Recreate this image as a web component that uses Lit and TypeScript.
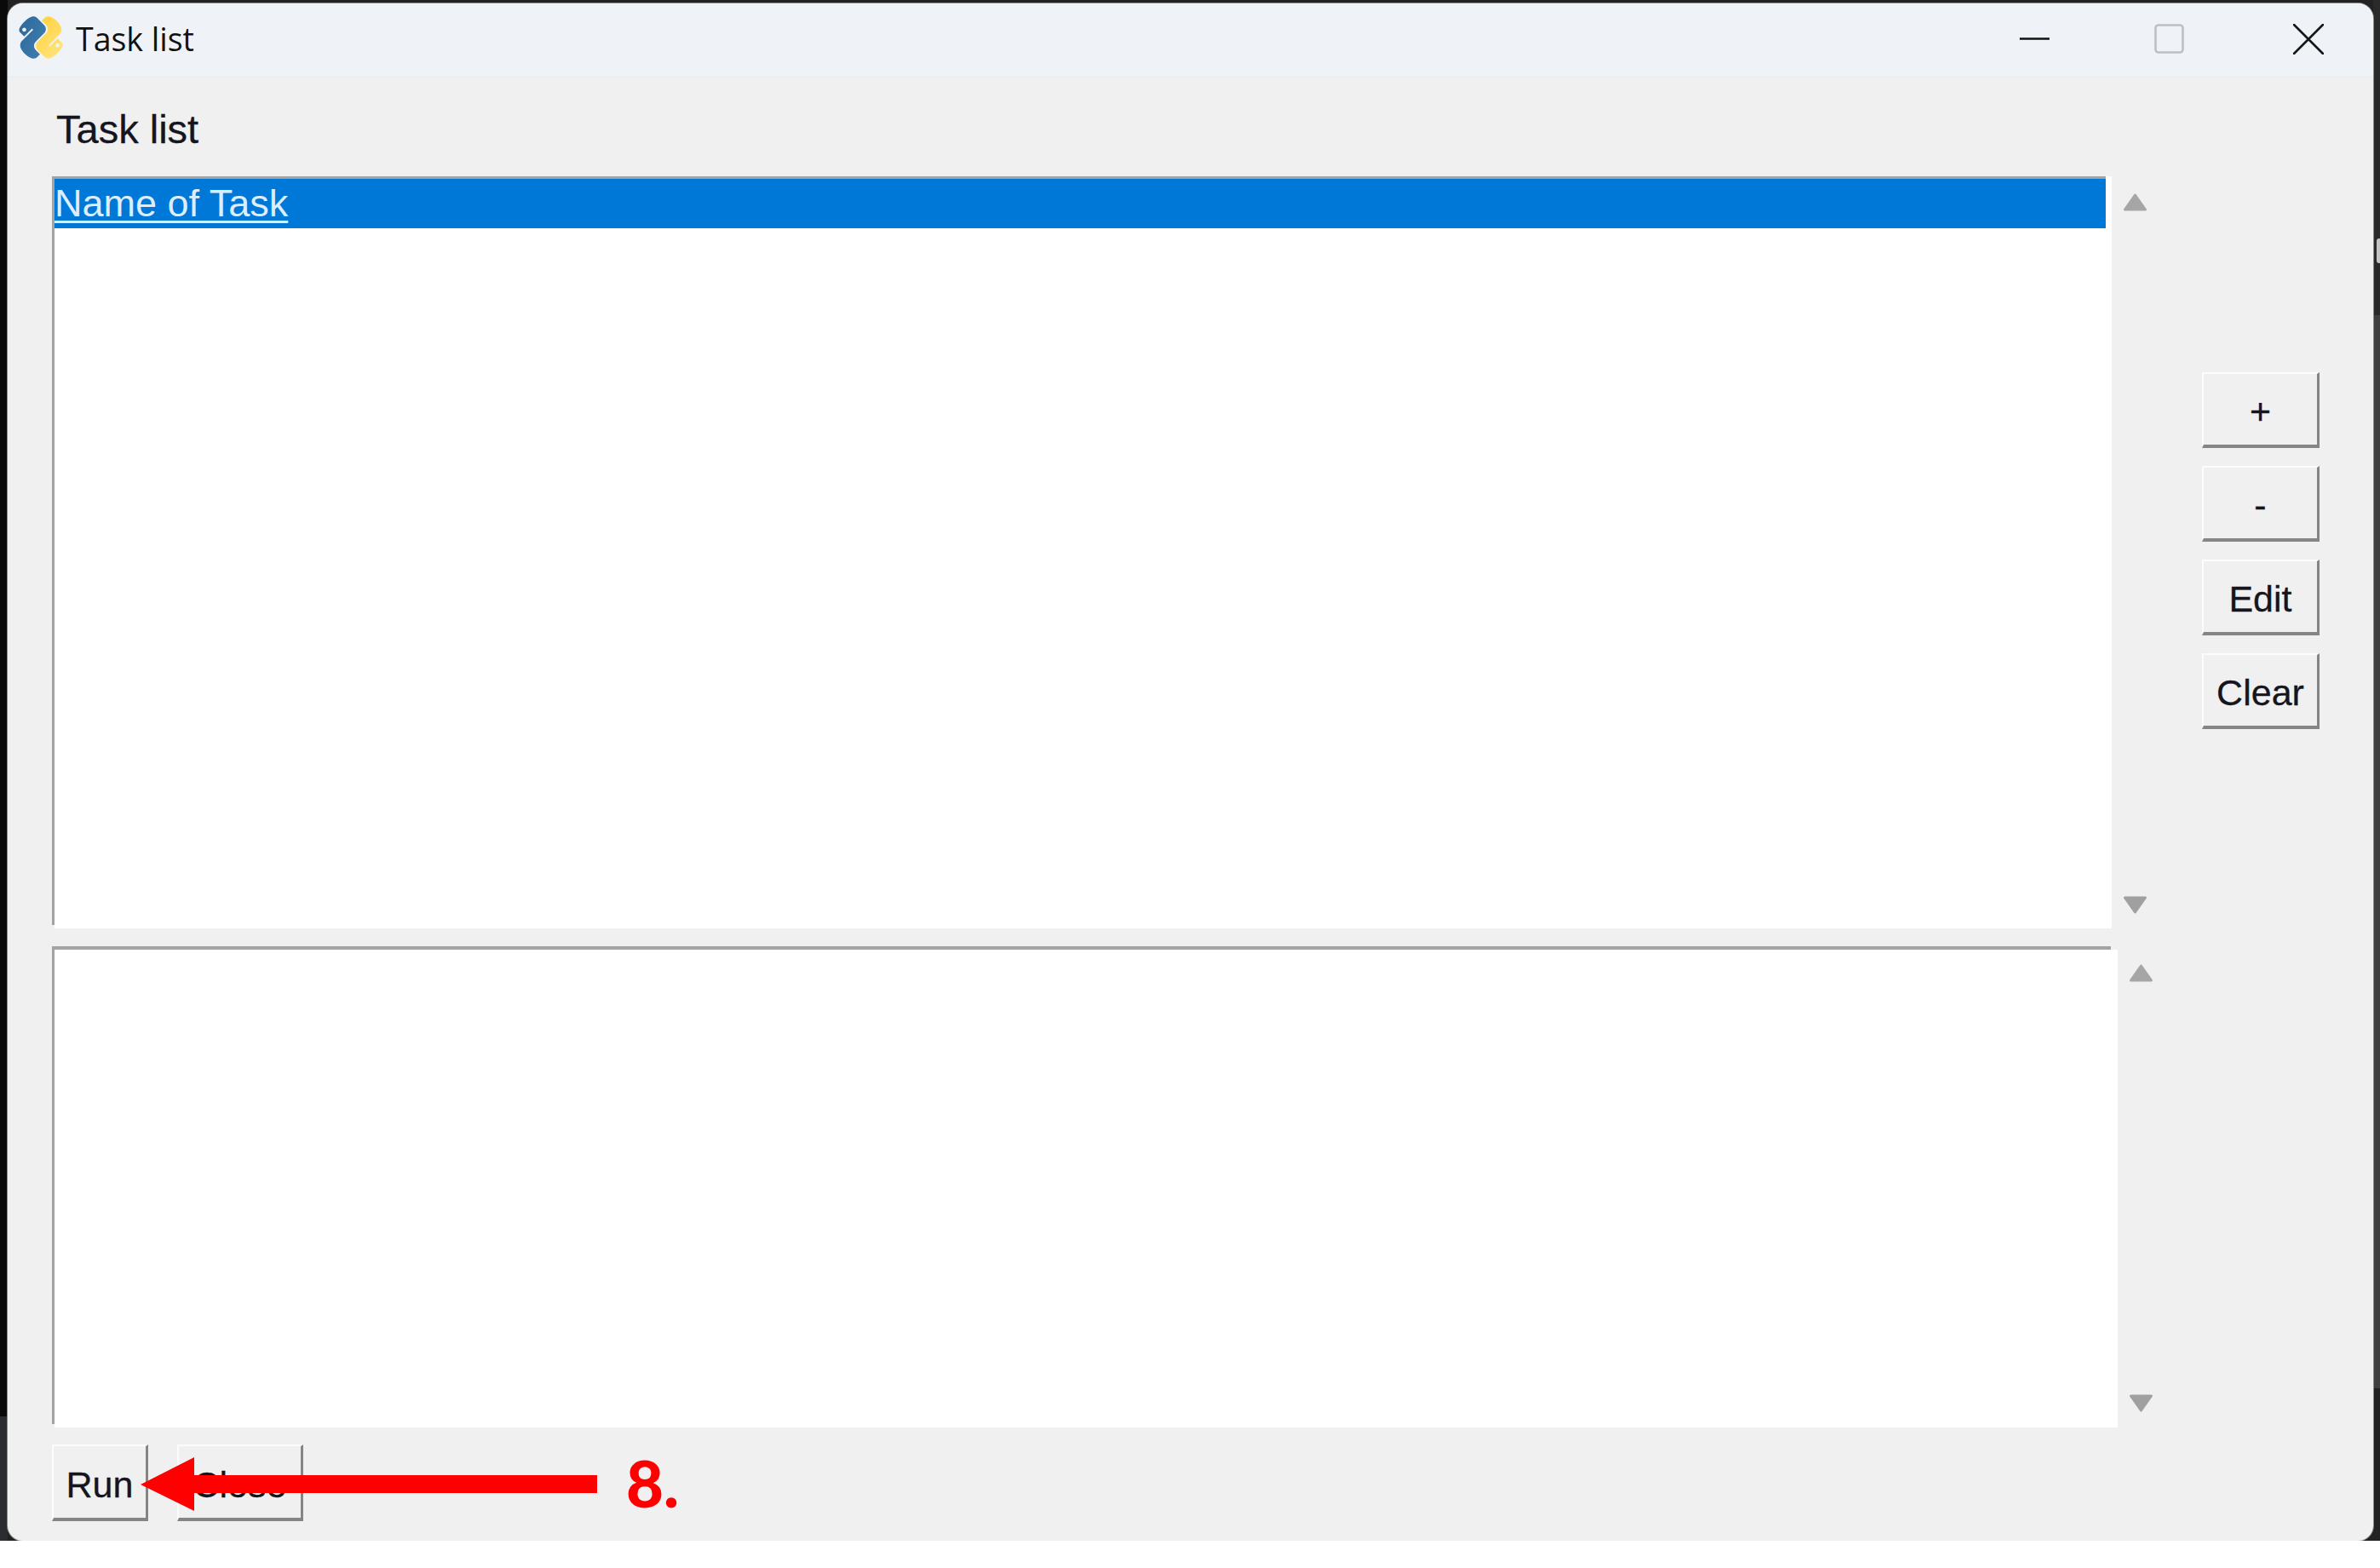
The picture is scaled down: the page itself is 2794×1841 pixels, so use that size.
import { LitElement, html, css, svg } from "lit";
import { customElement } from "lit/decorators.js";

const blue = "M14.25.18l.9.2.73.26.59.3.45.32.34.34.25.34.16.33.1.3.04.26.02.2-.01.13V8.5l-.05.63-.13.55-.21.46-.26.38-.3.31-.33.25-.35.19-.35.14-.33.1-.3.07-.26.04-.21.02H8.77l-.69.05-.59.14-.5.22-.41.27-.33.32-.27.35-.2.36-.15.37-.1.35-.07.32-.04.27-.02.21v3.06H3.17l-.21-.03-.28-.07-.32-.12-.35-.18-.36-.26-.36-.36-.35-.46-.32-.59-.28-.73-.21-.88-.14-1.05-.05-1.23.06-1.22.16-1.04.24-.87.32-.71.36-.57.4-.44.42-.33.42-.24.4-.16.36-.1.32-.05.24-.01h.16l.06.01h8.16v-.83H6.18l-.01-2.75-.02-.37.05-.34.11-.31.17-.28.25-.26.31-.23.38-.2.44-.18.51-.15.58-.12.64-.1.71-.06.77-.04.84-.02 1.27.05zm-6.3 1.98l-.23.33-.08.41.08.41.23.34.33.22.41.09.41-.09.33-.22.23-.34.08-.41-.08-.41-.23-.33-.33-.22-.41-.09-.41.09z";
const yellow = "M21.04 6.11l.28.06.32.12.35.18.36.27.36.35.35.47.32.59.28.73.21.88.14 1.04.05 1.23-.06 1.23-.16 1.04-.24.86-.32.71-.36.57-.4.45-.42.33-.42.24-.4.16-.36.09-.32.05-.24.02-.16-.01h-8.22v.82h5.84l.01 2.76.02.36-.05.34-.11.31-.17.29-.25.25-.31.24-.38.2-.44.17-.51.15-.58.13-.64.09-.71.07-.77.04-.84.01-1.27-.04-1.07-.14-.9-.2-.73-.25-.59-.3-.45-.33-.34-.34-.25-.34-.16-.33-.1-.3-.04-.25-.02-.2.01-.13v-5.34l.05-.64.13-.54.21-.46.26-.38.3-.32.33-.24.35-.2.35-.14.33-.1.3-.06.26-.04.21-.02.13-.01h5.84l.69-.05.59-.14.5-.21.41-.28.33-.32.27-.35.2-.36.15-.36.1-.35.07-.32.04-.28.02-.21V6.07h2.09l.14.01zm-6.47 14.25l-.23.33-.08.41.08.41.23.33.33.23.41.08.41-.08.33-.23.23-.33.08-.41-.08-.41-.23-.33-.33-.23-.41-.08-.41.08z";

const upArrow = svg`<path d="M14.5 3L26.5 20H2.5Z" fill="#a6a6a6" stroke="#a6a6a6" stroke-width="3" stroke-linejoin="round"/>`;
const downArrow = svg`<path d="M14.5 19L26.5 2H2.5Z" fill="#a0a0a0" stroke="#a0a0a0" stroke-width="3" stroke-linejoin="round"/>`;

@customElement("app-root")
export class AppRoot extends LitElement {
  static styles = css`
    :host {
      display: block;
      position: relative;
      width: 2794px;
      height: 1841px;
      background: #fff;
      overflow: hidden;
      font-family: "Liberation Sans", Arial, sans-serif;
      color: #15151f;
    }
    .frame {
      height: 1809px;
      box-sizing: border-box;
      padding: 4px 8px 0 9px;
      overflow: hidden;
      background:
        linear-gradient(#0a0a0a, #0a0a0a) 0 0 / 9px 1663px no-repeat,
        linear-gradient(#2a2c2f, #2a2c2f) 0 1663px / 9px 146px no-repeat,
        linear-gradient(#2a2a2a, #2a2a2a) 100% 0 / 8px 370px no-repeat,
        linear-gradient(#3f3f3f, #3f3f3f) 100% 370px / 8px 1260px no-repeat,
        #222;
    }
    .window {
      height: 100%;
      display: flex;
      flex-direction: column;
      background: #f0f0f0;
      border-radius: 18px;
      box-shadow: 0 0 0 1px #8a8a8a;
      overflow: hidden;
    }
    .pill {
      position: absolute;
      left: 2790px;
      top: 280px;
      width: 6px;
      height: 29px;
      border-radius: 3px;
      background: #c4c4c4;
    }
    .titlebar {
      flex: none;
      height: 87px;
      box-sizing: border-box;
      display: flex;
      align-items: center;
      background: #eff3f8;
      border-bottom: 1px solid #e7eaee;
      padding: 0 58px 3px 13px;
    }
    .logo { width: 52px; height: 52px; flex: none; margin-top: -3px; overflow: visible; }
    .title {
      margin-left: 15px;
      font-family: "Open Sans", sans-serif;
      font-size: 37.5px;
      line-height: 50px;
      color: #111;
      flex: 1;
    }
    .ctl { flex: none; display: block; }
    .ctl.max { margin-left: 123px; }
    .ctl.close { margin-left: 128px; }
    .body {
      flex: 1;
      min-height: 0;
      display: flex;
      flex-direction: column;
      padding: 36px 0 23px 52px;
    }
    .label {
      font-size: 47px;
      line-height: 50px;
      margin: 0 0 30px 5px;
      -webkit-text-stroke: 0.3px currentColor;
    }
    .row { display: flex; flex: none; }
    .row.one { height: 883px; }
    .row.two { height: 565px; margin-top: 21px; }
    .box {
      box-sizing: border-box;
      flex: none;
      padding-left: 3px;
      background:
        linear-gradient(#a3a3a3, #a3a3a3) 0 0 / 3px calc(100% - 4px) no-repeat,
        linear-gradient(#fff, #fff) 3px 0 / 100% 100% no-repeat;
    }
    .row.one .box { width: 2418px; padding-right: 7px; }
    .row.two .box {
      width: 2425px;
      background:
        linear-gradient(#a3a3a3, #a3a3a3) 0 0 / 3px calc(100% - 4px) no-repeat,
        linear-gradient(#a3a3a3, #a3a3a3) 0 0 / calc(100% - 8px) 4px no-repeat,
        linear-gradient(#fff, #fff) 3px 4px / 100% 100% no-repeat;
    }
    .item {
      box-sizing: border-box;
      height: 61px;
      line-height: 58px;
      border-top: 3px solid #a3a3a3;
      background: #0078d7;
      background-clip: padding-box;
      color: #dcedfd;
      font-size: 45px;
      text-decoration: underline;
      text-decoration-thickness: 3px;
      text-underline-offset: 5px;
    }
    .scroll {
      flex: none;
      width: 29px;
      margin-left: 13px;
      display: flex;
      flex-direction: column;
      justify-content: space-between;
      padding: 19px 0 16px;
    }
    .row.two .scroll { padding: 20px 0 17px; }
    .scroll svg { display: block; width: 29px; height: 22px; }
    .side {
      margin: 230px 0 0 64px;
      display: flex;
      flex-direction: column;
      gap: 21px;
    }
    .btn {
      box-sizing: border-box;
      display: flex;
      align-items: center;
      justify-content: center;
      width: 138px;
      height: 89px;
      padding-top: 6px;
      background: #f0f0f0;
      border-style: solid;
      border-width: 2px 3px 4px 2px;
      border-color: #fcfcfc #858585 #858585 #fcfcfc;
      font-size: 43px;
      line-height: 1;
      color: #15151f;
      -webkit-text-stroke: 0.3px currentColor;
    }
    .footer { display: flex; gap: 34px; margin-top: 20px; flex: none; }
    .footer .btn { height: 90px; width: 113px; }
    .footer .btn.wide { width: 148px; }
    .annot { position: absolute; left: 165px; top: 1711px; display: block; }
    .eight {
      position: absolute;
      left: 735px;
      top: 1696px;
      font-family: "Lato", sans-serif;
      font-weight: 900;
      font-size: 76px;
      line-height: 90px;
      color: #ff0000;
    }
  `;

  render() {
    return html`
      <div class="frame">
        <div class="window">
          <div class="titlebar">
            <svg class="logo" viewBox="0 0 24 24">
              <defs>
                <linearGradient id="b" gradientUnits="userSpaceOnUse" x1="4" y1="2" x2="12" y2="23">
                  <stop offset="0" stop-color="#2f6a9b" />
                  <stop offset="1" stop-color="#4484b8" />
                </linearGradient>
                <linearGradient id="y" gradientUnits="userSpaceOnUse" x1="16" y1="2" x2="18" y2="23">
                  <stop offset="0" stop-color="#ffcf35" />
                  <stop offset="1" stop-color="#ffe278" />
                </linearGradient>
              </defs>
              <g transform="rotate(-45 12 12) translate(12 12) scale(1.03) translate(-12 -12)">
                <path fill="url(#b)" fill-rule="evenodd" d=${blue} />
                <path fill="url(#y)" fill-rule="evenodd" d=${yellow} />
              </g>
            </svg>
            <div class="title">Task list</div>
            <svg class="ctl min" width="35" height="35" viewBox="0 0 35 35">
              <path d="M0 17.5H35" stroke="#111" stroke-width="2.4" />
            </svg>
            <svg class="ctl max" width="35" height="35" viewBox="0 0 35 35">
              <rect x="1.5" y="1.5" width="32" height="32" rx="3.5" fill="none" stroke="#bcbfc3" stroke-width="2.6" />
            </svg>
            <svg class="ctl close" width="36" height="36" viewBox="0 0 36 36">
              <path d="M1 1L35 35M35 1L1 35" stroke="#161616" stroke-width="2.6" stroke-linecap="round" />
            </svg>
          </div>
          <div class="body">
            <div class="label">Task list</div>
            <div class="row one">
              <div class="box"><div class="item">Name of Task</div></div>
              <div class="scroll">
                <svg viewBox="0 0 29 22">${upArrow}</svg>
                <svg viewBox="0 0 29 22">${downArrow}</svg>
              </div>
              <div class="side">
                <div class="btn">+</div>
                <div class="btn">-</div>
                <div class="btn">Edit</div>
                <div class="btn">Clear</div>
              </div>
            </div>
            <div class="row two">
              <div class="box"></div>
              <div class="scroll">
                <svg viewBox="0 0 29 22">${upArrow}</svg>
                <svg viewBox="0 0 29 22">${downArrow}</svg>
              </div>
            </div>
            <div class="footer">
              <div class="btn">Run</div>
              <div class="btn wide">Close</div>
            </div>
          </div>
        </div>
      </div>
      <div class="pill"></div>
      <svg class="annot" width="536" height="63" viewBox="0 0 536 63">
        <path d="M0 32L63 0V21H536V42H63V63Z" fill="#ff0000" />
      </svg>
      <div class="eight">8.</div>
    `;
  }
}
